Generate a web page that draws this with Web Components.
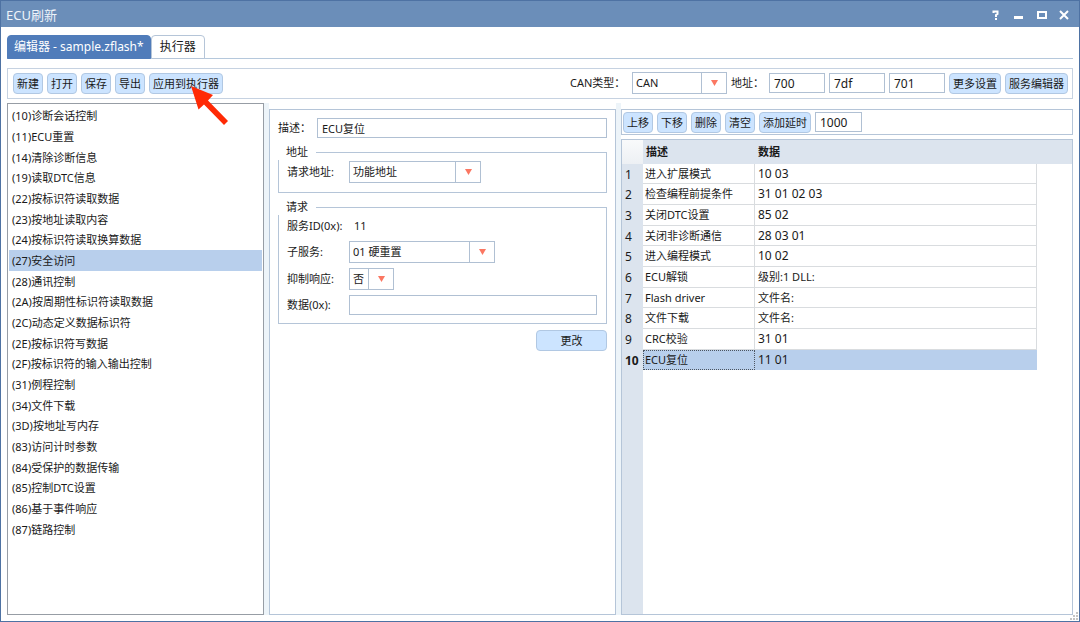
<!DOCTYPE html>
<html lang="zh-CN">
<head>
<meta charset="utf-8">
<title>ECU刷新</title>
<style>
html, body { margin: 0; height: 100%; }
body { font: 11px/16px "Noto Sans", "Noto Sans CJK SC", sans-serif; color: #1a1a1a; background: #fff; }
</style>
</head>
<body>
<flash-window></flash-window>
<script>
const base = `
* { box-sizing: border-box; }
button, input, select { font: inherit; color: inherit; margin: 0; }
button { cursor: pointer; }
input { height: 20px; padding: 0 4px; border: 1px solid #b0c0d3; background: #fff; border-radius: 0; min-width: 0; outline: 0; }
label { white-space: nowrap; }
`;

class BaseElement extends HTMLElement {
  render(css, html) {
    this.attachShadow({ mode: 'open' }).innerHTML = `<style>${base}${css}</style>${html}`;
  }
}

customElements.define('flash-button', class extends BaseElement {
  connectedCallback() {
    this.render(`
      :host { display: block; }
      button { display: block; width: 100%; height: 21px; padding: 0 3px; border: 1px solid #b1c8e3; border-radius: 4px;
        background: #cce4ff; line-height: 19px; white-space: nowrap; }
    `, `<button type="button"><slot></slot></button>`);
  }
});

customElements.define('flash-select', class extends BaseElement {
  connectedCallback() {
    const label = this.getAttribute('label');
    this.render(`
      :host { display: flex; align-items: center; }
      label { width: var(--label-width, auto); }
      .box { display: grid; width: var(--box-width); height: 22px; }
      select, .arrow { grid-area: 1 / 1; }
      select { appearance: none; width: 100%; height: 100%; padding: 0 28px 0 3px; border: 1px solid #b0c0d3; border-radius: 0; background: #fff; outline: 0; }
      .arrow { justify-self: end; display: grid; place-items: center; width: 26px; height: 100%; border-left: 1px solid #b0c0d3; pointer-events: none; }
    `, `<label for="s">${label}</label>
      <div class="box"><select id="s"><option>${this.getAttribute('value')}</option></select>
      <span class="arrow"><svg width="7" height="6" viewBox="0 0 7 6"><path d="M0 0h7L3.500 6z" fill="#fb7762"/></svg></span></div>`);
  }
});

customElements.define('flash-titlebar', class extends BaseElement {
  connectedCallback() {
    this.render(`
      :host { display: flex; align-items: center; height: 26px; padding: 2px 7px 0 5px; background: #6b8eb9; color: #eef3f9; }
      h1 { margin: 0; flex: 1; font-size: 13px; line-height: 18px; font-weight: 400; }
      nav { display: flex; gap: 8px; }
      button { width: 15px; height: 16px; padding: 0; border: 0; background: none; color: #fff; }
      svg { display: block; }
    `, `<h1>ECU刷新</h1><nav>
      <button type="button" aria-label="帮助"><svg width="15" height="16" fill="none" stroke="#fff" stroke-width="2"><path d="M5.500 6V4.500h4v2.500L8 8v2M8 11v2"/></svg></button>
      <button type="button" aria-label="最小化"><svg width="15" height="16"><path d="M3 9h9v3H3z" fill="#fff"/></svg></button>
      <button type="button" aria-label="最大化"><svg width="15" height="16"><path d="M3 4h10v8H3zM5 6v4h6V6z" fill="#fff" fill-rule="evenodd"/></svg></button>
      <button type="button" aria-label="关闭"><svg width="15" height="16" stroke="#fff" stroke-width="2"><path d="M3 4l8 8M11 4l-8 8"/></svg></button>
    </nav>`);
  }
});

customElements.define('flash-tabs', class extends BaseElement {
  connectedCallback() {
    this.render(`
      :host { display: flex; height: 24px; border-bottom: 1px solid #b5c8dc; font-size: 12px; }
      button { height: 24px; padding: 0 8px; border: 1px solid #b5c5d8; border-radius: 4px 4px 0 0; background: #fff; }
      button[aria-selected=true] { padding: 0 6px; border-color: #507cba; background: #507cba; color: #fff; }
    `, `<button type="button" role="tab" aria-selected="true">编辑器 - sample.zflash*</button>
      <button type="button" role="tab" aria-selected="false">执行器</button>`);
    this.setAttribute('role', 'tablist');
  }
});

customElements.define('flash-toolbar', class extends BaseElement {
  connectedCallback() {
    this.render(`
      :host { display: flex; align-items: center; gap: 4px; height: 31px; padding: 0 4px 1px 5px; border: 1px solid #c6d2e1; box-sizing: border-box; }
      .push { margin-left: auto; }
      flash-select { --box-width: 95px; --label-width: 62px; }
      input { width: 56px; font-size: 12px; }
      .address { display: flex; align-items: center; gap: 4px; }
      .address label { width: 34px; }
    `, `<flash-button>新建</flash-button><flash-button>打开</flash-button><flash-button>保存</flash-button>
      <flash-button>导出</flash-button><flash-button>应用到执行器</flash-button>
      <flash-select class="push" label="CAN类型：" value="CAN"></flash-select>
      <div class="address"><label for="a">地址：</label><input id="a" value="700">
      <input aria-label="功能地址" value="7df"><input aria-label="响应地址" value="701"></div>
      <flash-button>更多设置</flash-button><flash-button>服务编辑器</flash-button>`);
  }
});

const services = ['(10)诊断会话控制', '(11)ECU重置', '(14)清除诊断信息', '(19)读取DTC信息', '(22)按标识符读取数据',
  '(23)按地址读取内容', '(24)按标识符读取换算数据', '(27)安全访问', '(28)通讯控制', '(2A)按周期性标识符读取数据',
  '(2C)动态定义数据标识符', '(2E)按标识符写数据', '(2F)按标识符的输入输出控制', '(31)例程控制', '(34)文件下载',
  '(3D)按地址写内存', '(83)访问计时参数', '(84)受保护的数据传输', '(85)控制DTC设置', '(86)基于事件响应', '(87)链路控制'];

customElements.define('service-list', class extends BaseElement {
  connectedCallback() {
    this.render(`
      :host { display: block; padding: 1px; border: 1px solid #979da5; overflow: hidden; }
      ul { margin: 0; padding: 0; list-style: none; }
      li { height: 21px; padding-left: 3px; line-height: 21px; white-space: nowrap; }
      li:nth-child(3n) { height: 20px; }
      li[aria-selected=true] { background: #b8cfec; }
    `, `<ul role="listbox" aria-label="服务">${services.map((s, i) =>
      `<li role="option" aria-selected="${i === 7}">${s}</li>`).join('')}</ul>`);
  }
});

customElements.define('group-box', class extends BaseElement {
  connectedCallback() {
    this.render(`
      :host { display: block; }
      fieldset { margin: 0; min-width: 0; padding: 0 9px 8px 8px; border: 1px solid #b5c5d8; }
      legend { margin-left: -9px; padding: 0 8px; height: 16px; background: #fff; }
    `, `<fieldset><legend>${this.getAttribute('caption')}</legend><slot></slot></fieldset>`);
  }
});

customElements.define('service-form', class extends BaseElement {
  connectedCallback() {
    this.render(`
      :host { display: block; padding: 8px; border: 1px solid #b5c5d8; }
      .row { display: flex; align-items: center; }
      .row label { width: 62px; }
      .row input { flex: 1; }
      .top label { width: 39px; }
      .top { margin-bottom: 6px; }
      flash-select { --label-width: 62px; }
      .request { margin-top: 6px; }
      .address { --box-width: 132px; padding: 1px 0; }
      .sub { --box-width: 146px; margin-top: 6px; }
      .suppress { --box-width: 45px; margin: 5px 0; }
      output { padding-left: 5px; }
      .apply { width: 71px; margin: 6px 0 0 auto; }
      .id { height: 20px; padding-top: 2px; }
    `, `<div class="row top"><label for="d">描述：</label><input id="d" value="ECU复位"></div>
      <group-box caption="地址"><flash-select class="address" label="请求地址:" value="功能地址"></flash-select></group-box>
      <group-box class="request" caption="请求">
        <div class="row id"><label for="id">服务ID(0x):</label><output id="id">11</output></div>
        <flash-select class="sub" label="子服务:" value="01 硬重置"></flash-select>
        <flash-select class="suppress" label="抑制响应:" value="否"></flash-select>
        <div class="row"><label for="x">数据(0x):</label><input id="x"></div>
      </group-box>
      <flash-button class="apply">更改</flash-button>`);
  }
});

const steps = [['进入扩展模式', '10 03'], ['检查编程前提条件', '31 01 02 03'], ['关闭DTC设置', '85 02'],
  ['关闭非诊断通信', '28 03 01'], ['进入编程模式', '10 02'], ['ECU解锁', '级别:1 DLL:'], ['Flash driver', '文件名:'],
  ['文件下载', '文件名:'], ['CRC校验', '31 01'], ['ECU复位', '11 01']];

customElements.define('step-table', class extends BaseElement {
  connectedCallback() {
    this.render(`
      :host { display: block; border: 1px solid #b5c5d8; background: linear-gradient(#dce4ee, #dce4ee) 0 0 / 21px 100% no-repeat; overflow: hidden; }
      table { width: 100%; table-layout: fixed; border-collapse: separate; border-spacing: 0; }
      th, td { height: 21px; padding: 0 2px; text-align: left; line-height: 18px; white-space: nowrap; }
      tbody tr:nth-child(3n+1) > * { height: 20px; }
      thead th { height: 24px; padding: 0 3px; background: #dce4ee; }
      thead td { background: linear-gradient(#f9fafb, #edf0f4); }
      tbody th { padding: 1px 0 0 3px; font-size: 12px; font-weight: 400; }
      td.name, td.data { border-right: 1px solid #d9dcdf; border-bottom: 1px solid #d9dcdf; }
      td.data { padding-left: 3px; }
      td.hex { font-size: 12px; }
      .current th { font-weight: 700; }
      .current td.name, .current td.data { background: #b8cfec; border-color: #b8cfec; }
      .current td.name { outline: 1px dotted #4c5561; outline-offset: -1px; }
      .index { width: 21px; } .desc { width: 112px; } .rest { width: 35px; }
    `, `<table><colgroup><col class="index"><col class="desc"><col><col class="rest"></colgroup>
      <thead><tr><td></td><th>描述</th><th>数据</th><th></th></tr></thead>
      <tbody>${steps.map(([a, b], i) => `<tr class="${i === 9 ? 'current' : ''}"><th scope="row">${i + 1}</th>
        <td class="name">${a}</td><td class="data ${/^[\d ]+$/.test(b) ? 'hex' : ''}">${b}</td><td></td></tr>`).join('')}</tbody></table>`);
  }
});

customElements.define('step-panel', class extends BaseElement {
  connectedCallback() {
    this.render(`
      :host { display: flex; flex-direction: column; gap: 4px; }
      .bar { display: flex; align-items: center; gap: 4px; height: 26px; padding: 0 1px; border: 1px solid #b5c5d8; }
      input { width: 47px; font-size: 12px; }
      step-table { flex: 1; }
    `, `<div class="bar"><flash-button>上移</flash-button><flash-button>下移</flash-button><flash-button>删除</flash-button>
      <flash-button>清空</flash-button><flash-button>添加延时</flash-button><input aria-label="延时" value="1000"></div>
      <step-table></step-table>`);
  }
});

customElements.define('flash-window', class extends BaseElement {
  connectedCallback() {
    this.render(`
      :host { display: flex; flex-direction: column; position: relative; min-height: 100vh; border: 1px solid #4e72a3; background: #fff; box-sizing: border-box; }
      main { flex: 1; display: flex; flex-direction: column; padding: 8px 6px 6px; }
      flash-tabs { margin-bottom: 9px; }
      .panes { flex: 1; display: grid; grid-template-columns: 257fr 5px 347fr 5px 452fr; margin-top: 4px; }
      .split { background: #edf4f9; }
      service-form, step-panel { margin-top: 6px; }
      .pointer { position: absolute; left: 189px; top: 84px; pointer-events: none; }
      .grip { position: absolute; right: 1px; bottom: 1px; }
    `, `<flash-titlebar></flash-titlebar>
      <main><flash-tabs></flash-tabs><flash-toolbar></flash-toolbar>
      <div class="panes"><service-list></service-list><div class="split"></div><service-form></service-form>
      <div class="split"></div><step-panel></step-panel></div></main>
      <svg class="pointer" width="40" height="42" viewBox="0 0 40 42"><path d="M1 1l22 9-5 5.500 20 20.500-4 4-20-20.500-5.500 5z" fill="#ff2a05"/></svg>
      <svg class="grip" width="8" height="8" fill="#c4c4c4"><path d="M6 0h2v2H6zM6 3h2v2H6zM6 6h2v2H6zM3 3h2v2H3zM3 6h2v2H3zM0 6h2v2H0z"/></svg>`);
  }
});
</script>
</body>
</html>
